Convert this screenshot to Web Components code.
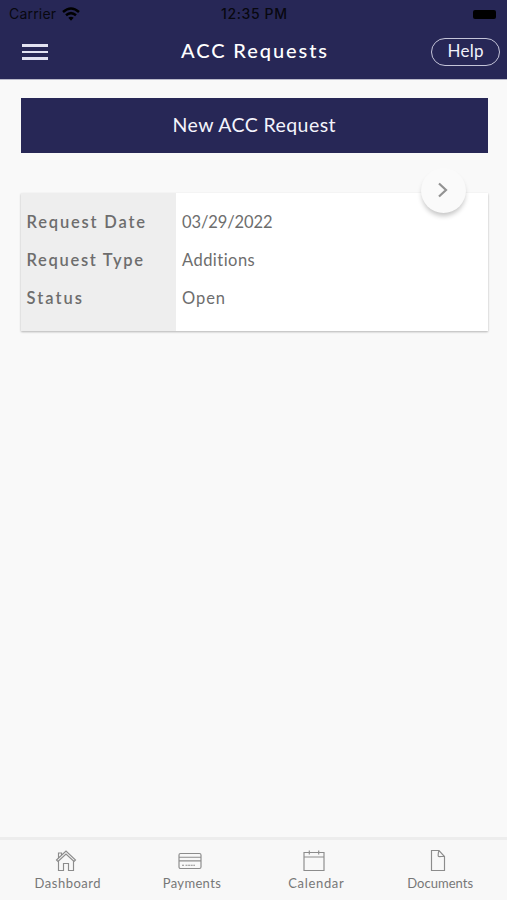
<!DOCTYPE html>
<html lang="en">
<head>
<meta charset="utf-8">
<title>ACC Requests</title>
<style>
html,body{margin:0;height:100%;background:#f9f9f9}
body{font-family:Lato,"Open Sans",sans-serif;overflow:hidden}
</style>
</head>
<body>
<acc-app></acc-app>
<script>
function define(name, html, ready) {
  const t = document.createElement('template');
  t.innerHTML = html;
  customElements.define(name, class extends HTMLElement {
    connectedCallback() {
      if (this.shadowRoot) return;
      this.attachShadow({mode: 'open'}).append(t.content.cloneNode(true));
      if (ready) ready(this);
    }
  });
}

// A single line of text whose tracking fills the width given in the "w" attribute.
define('tracked-text', `<style>
  :host{display:block;white-space:nowrap;line-height:20px;height:20px}
  span{display:inline-block}
</style><span><slot></slot></span>`, el => {
  const span = el.shadowRoot.querySelector('span');
  const w = +el.getAttribute('w');
  const natural = span.getBoundingClientRect().width;
  const gap = (w - natural) / (el.textContent.length - 1);
  span.style.letterSpacing = gap + 'px';
  span.style.marginRight = -gap + 'px';
});

define('status-bar', `<style>
  :host{display:grid;grid-template-columns:221px 1fr auto;align-items:center;height:28px;color:#08080f;font-family:Inter,sans-serif;font-size:14px}
  .l{display:flex;align-items:center;gap:6px;padding-left:9px}
  .t{font-weight:500}
  svg{display:block}
  .b{width:23px;height:9px;border-radius:2px;background:#000;margin-right:11px}
</style>
<div class="l"><tracked-text w="47">Carrier</tracked-text>
<svg width="18" height="14" viewBox="0 0 18 14" fill="none" stroke="#000" stroke-width="2.5"><path d="M1 5Q9-2 17 5M4 8.3Q9 4 14 8.3"/><path d="M9 13.8L6.3 10.8Q9 8.8 11.7 10.8Z" fill="#000" stroke="none"/></svg></div>
<tracked-text class="t" w="66">12:35 PM</tracked-text><div class="b"></div>`);

define('menu-button', `<style>
  :host{display:grid;gap:4px;width:26px}
  i{height:2.5px;background:#e2e2f2}
</style><i></i><i></i><i></i>`);

define('help-button', `<style>
  :host{display:flex;box-sizing:border-box;width:69px;height:28px;border:1.5px solid #c4c4d8;border-radius:14px;justify-content:center;padding-top:2px;color:#f1f1fa;font-size:17px}
</style><slot></slot>`);

define('app-header', `<style>
  :host{display:block;background:#272756;height:79px;box-shadow:0 1px 0 #b9b9c9}
  .row{display:grid;grid-template-columns:181px 1fr auto;align-items:center;height:48px;padding-right:7px}
  menu-button{margin-left:22px}
  ::slotted(tracked-text){color:#fff;margin-top:-5px}
</style>
<status-bar></status-bar>
<div class="row"><menu-button></menu-button><slot></slot>
<help-button><tracked-text w="36">Help</tracked-text></help-button></div>`);

define('primary-button', `<style>
  :host{display:flex;justify-content:center;align-items:center;box-sizing:border-box;height:55px;background:#272756;color:#f4f4fc;font-size:19.5px;padding-bottom:2px}
</style><slot></slot>`);

define('round-chevron', `<style>
  :host{display:grid;place-items:center;width:45px;height:45px;border-radius:50%;background:#fafafa;box-shadow:0 4px 5px -1px rgba(0,0,0,.23)}
</style><svg width="12" height="16" viewBox="0 0 12 16" fill="none" stroke="#929292" stroke-width="2.2"><path d="M2 1.5L9 8L2 14.5"/></svg>`);

define('request-card', `<style>
  :host{display:grid;grid-template-columns:155.5px 1fr;height:138px;position:relative;background:#fff;color:#6d6d6d;box-shadow:0 1px 2px rgba(0,0,0,.28);font-size:16.5px}
  .k,.v{display:flex;flex-direction:column;gap:18px;padding:19px 6px 0}
  .k{background:#eee;font-weight:600;color:#6d6d6d}
  round-chevron{position:absolute;right:22px;top:-25px}
</style>
<div class="k"><tracked-text w="118.5">Request Date</tracked-text><tracked-text w="116.5">Request Type</tracked-text><tracked-text w="55.5">Status</tracked-text></div>
<div class="v"><tracked-text w="90.5">03/29/2022</tracked-text><tracked-text w="73">Additions</tracked-text><tracked-text w="43">Open</tracked-text></div>
<round-chevron></round-chevron>`);

define('tab-item', `<style>
  :host{display:flex;flex-direction:column;align-items:center;color:#777;font-size:13px}
  .i{height:24px;margin-right:4px}
</style><div class="i"><slot name="icon"></slot></div><slot></slot>`);

define('tab-bar', `<style>
  :host{display:grid;grid-template-columns:repeat(4,124.2px);box-sizing:border-box;height:63px;border-top:3px solid #ededed;background:#f8f8f8;padding:9px 0 0 5.5px}
  svg{display:block;fill:none;stroke:#8c8c8c;stroke-width:1.15}
</style>
<tab-item><svg slot="icon" width="24" height="24"><path d="M2.5 11L12 2L21.5 11L20 12.5L12 5L4 12.5Z M4.5 12V21.5H9.5V14.5H14.5V21.5H19.5V12 M4.5 8.8V4H7.5V6"/></svg><tracked-text w="66">Dashboard</tracked-text></tab-item>
<tab-item><svg slot="icon" width="24" height="24"><rect x="1" y="4.5" width="22" height="15" rx="1.5"/><path d="M1 8.2H23M1 11.8H23"/><path d="M4 16.2H6M7.5 16.2H17" stroke-dasharray="2 .6"/></svg><tracked-text w="58">Payments</tracked-text></tab-item>
<tab-item><svg slot="icon" width="24" height="24"><path d="M2 3.5H22V21.5H2ZM2 8H22M7.3 1.5V5.5M16.7 1.5V5.5"/></svg><tracked-text w="55.5">Calendar</tracked-text></tab-item>
<tab-item><svg slot="icon" width="24" height="24"><path d="M5.5 1.5H13L18.5 7.5V21.5H5.5ZM13 1.5C12 4 12 7.5 12.5 7.5C14 8 17 7 18.5 7.5"/></svg><tracked-text w="66">Documents</tracked-text></tab-item>`);

define('acc-app', `<style>
  :host{display:flex;flex-direction:column;height:100vh;background:#f9f9f9}
  app-header tracked-text{font-weight:500;font-size:20px}
  main{flex:1;display:flex;flex-direction:column;gap:39.5px;padding:19px 19.5px 0 20.5px}
</style>
<app-header><tracked-text w="146">ACC Requests</tracked-text></app-header>
<main><primary-button><tracked-text w="163">New ACC Request</tracked-text></primary-button><request-card></request-card></main>
<tab-bar></tab-bar>`);
</script>
</body>
</html>
